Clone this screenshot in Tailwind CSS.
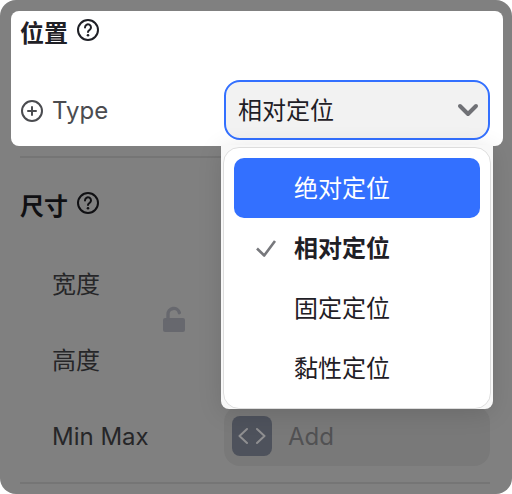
<!DOCTYPE html>
<html lang="zh-CN">
<head>
    <meta charset="UTF-8">
    <meta name="viewport" content="width=device-width, initial-scale=1.0">
    <title>位置</title>
    <script src="https://cdn.jsdelivr.net/npm/@tailwindcss/browser@4"></script>
</head>
<body class="bg-white font-['Inter','Noto_Sans_CJK_SC',sans-serif] text-2xl text-[#1f2026]">

    <main class="w-full overflow-hidden rounded-2xl bg-[#808080] pt-[11px] pb-[10px]">

        <!-- Position -->
        <section class="relative z-10 ml-[11px] mr-[9px] rounded-lg bg-white pl-[9px] pr-[13px] pb-[6px]">
            <div class="flex h-[46px] items-center gap-2">
                <h2 class="font-bold">位置</h2>
                <button type="button" aria-label="位置" class="mb-2">
                    <svg class="size-6" viewBox="0 0 24 24" fill="none" stroke="currentColor" stroke-width="2" stroke-linecap="round" stroke-linejoin="round">
                        <circle cx="12" cy="12" r="10" />
                        <path d="M9 9.4a3 3 0 1 1 4.6 2.5c-1 .6-1.6 1.1-1.6 2.2" />
                        <path d="M12 17.2v.1" stroke-width="2.6" />
                    </svg>
                </button>
            </div>
            <div class="mt-[23px] flex items-center">
                <label for="type" class="flex w-[204px] items-center gap-2 pt-[2px] text-[#4b4c50]">
                    <svg class="size-6" viewBox="0 0 24 24" fill="none" stroke="currentColor" stroke-width="2" stroke-linecap="round">
                        <circle cx="12" cy="12" r="10" />
                        <path d="M12 8v8M8 12h8" />
                    </svg>
                    Type
                </label>
                <div class="relative flex-1">
                    <select id="type" class="block h-[60px] w-full appearance-none rounded-2xl border-2 border-[#3370ff] bg-[#f2f2f2] pl-3 pr-12 pt-[2px] outline-none">
                        <option>绝对定位</option>
                        <option selected>相对定位</option>
                        <option>固定定位</option>
                        <option>黏性定位</option>
                    </select>
                    <svg class="pointer-events-none absolute right-[10px] top-[18px] size-6" viewBox="0 0 24 24" fill="none" stroke="#707176" stroke-width="4" stroke-linecap="round" stroke-linejoin="round">
                        <path d="M4 8l8 8 8-8" />
                    </svg>

                    <!-- Open menu -->
                    <div class="absolute -left-[3px] -right-[3px] top-[65px] rounded-b-lg bg-[#f8f8f8] px-[2px] pt-[2px] shadow-[0_4px_24px_rgba(0,0,0,0.12)]">
                        <ul role="listbox" aria-label="Type" class="rounded-2xl border border-[#dddddd] bg-white p-[10px]">
                            <li>
                                <button type="button" role="option" class="flex h-[60px] w-full items-center rounded-[10px] bg-[#3370ff] pl-[60px] pt-[2px] text-white">绝对定位</button>
                            </li>
                            <li>
                                <button type="button" role="option" aria-selected="true" class="flex h-[60px] w-full items-center gap-4 rounded-[10px] pl-5 pt-[2px] font-bold">
                                    <svg class="size-6" viewBox="0 0 24 24" fill="none" stroke="#77787c" stroke-width="2.6" stroke-linejoin="round">
                                        <path d="M3 11.500l7.200 7L21 4" />
                                    </svg>
                                    相对定位
                                </button>
                            </li>
                            <li>
                                <button type="button" role="option" class="flex h-[60px] w-full items-center rounded-[10px] pl-[60px] pt-[2px]">固定定位</button>
                            </li>
                            <li>
                                <button type="button" role="option" class="flex h-[60px] w-full items-center rounded-[10px] pl-[60px] pt-[2px]">黏性定位</button>
                            </li>
                        </ul>
                    </div>
                </div>
            </div>
        </section>

        <!-- Size -->
        <section class="mt-[10px] ml-5 mr-[22px] border-y-2 border-[#757575] pb-4 pt-[26px] text-[#262628]">
            <div class="flex h-[46px] items-center gap-2 text-[#101013]">
                <h2 class="font-bold">尺寸</h2>
                <button type="button" aria-label="尺寸" class="mb-2">
                    <svg class="size-6" viewBox="0 0 24 24" fill="none" stroke="currentColor" stroke-width="2" stroke-linecap="round" stroke-linejoin="round">
                        <circle cx="12" cy="12" r="10" />
                        <path d="M9 9.4a3 3 0 1 1 4.6 2.5c-1 .6-1.6 1.1-1.6 2.2" />
                        <path d="M12 17.2v.1" stroke-width="2.6" />
                    </svg>
                </button>
            </div>
            <div class="mt-6 flex">
                <div class="flex w-[140px] flex-col gap-4 pl-8">
                    <label for="width" class="flex h-[60px] items-center pt-[2px]">宽度</label>
                    <label for="height" class="flex h-[60px] items-center pt-[2px]">高度</label>
                </div>
                <button type="button" aria-label="锁定" class="flex w-16 items-center pb-1">
                    <svg class="size-7" viewBox="0 0 28 28" fill="none">
                        <rect x="3" y="12" width="22" height="14" rx="2" fill="#67686e" />
                        <path d="M8 13V8.500a5.800 5.800 0 0 1 11.400-1.800" stroke="#67686e" stroke-width="3.400" stroke-linecap="round" />
                    </svg>
                </button>
                <div class="flex flex-1 flex-col gap-4">
                    <input id="width" type="text" class="h-[60px] w-full rounded-2xl bg-[#797979] px-4">
                    <input id="height" type="text" class="h-[60px] w-full rounded-2xl bg-[#797979] px-4">
                </div>
            </div>
            <div class="mt-4 flex items-center">
                <label for="minmax" class="w-[204px] pl-8 pt-[2px]">Min Max</label>
                <div class="flex h-[60px] min-w-0 flex-1 items-center gap-4 rounded-2xl bg-[#797979] px-2">
                    <button type="button" aria-label="Min Max" class="flex size-10 shrink-0 items-center justify-center rounded-lg bg-[#4e525c]">
                        <svg class="size-7" viewBox="0 0 28 28" fill="none" stroke="#8f8f91" stroke-width="2" stroke-linecap="round" stroke-linejoin="round">
                            <path d="M9 7l-7.500 7L9 21M19 7l7.500 7-7.500 7" />
                        </svg>
                    </button>
                    <input id="minmax" type="text" placeholder="Add" class="w-full min-w-0 pt-[2px] placeholder:text-[#515153] outline-none">
                </div>
            </div>
        </section>

    </main>

</body>
</html>
